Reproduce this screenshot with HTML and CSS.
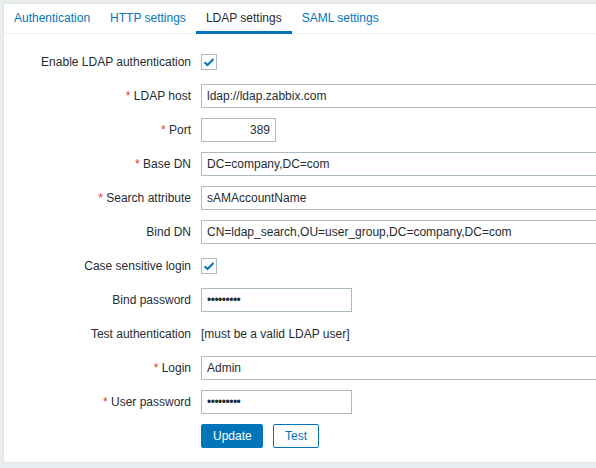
FILE: index.html
```html
<!DOCTYPE html>
<html>
<head>
<meta charset="utf-8">
<link rel="stylesheet" href="styles.css">
</head>
<body>
<div class="container">
  <ul class="tabs">
    <li class="tab">Authentication</li>
    <li class="tab">HTTP settings</li>
    <li class="tab active">LDAP settings</li>
    <li class="tab">SAML settings</li>
  </ul>
  <div class="form">
    <div class="label">Enable LDAP authentication</div>
    <div class="field"><span class="checkbox"><svg width="12" height="10" viewBox="0 0 12 10"><path d="M1.5 5.2 L4.5 8 L10.5 2" fill="none" stroke="#0275b8" stroke-width="2"/></svg></span></div>

    <div class="label"><span class="req">*</span> LDAP host</div>
    <div class="field"><input class="input wide" type="text" value="ldap://ldap.zabbix.com"></div>

    <div class="label"><span class="req">*</span> Port</div>
    <div class="field"><input class="input port" type="text" value="389"></div>

    <div class="label"><span class="req">*</span> Base DN</div>
    <div class="field"><input class="input wide" type="text" value="DC=company,DC=com"></div>

    <div class="label"><span class="req">*</span> Search attribute</div>
    <div class="field"><input class="input wide" type="text" value="sAMAccountName"></div>

    <div class="label">Bind DN</div>
    <div class="field"><input class="input wide" type="text" value="CN=ldap_search,OU=user_group,DC=company,DC=com"></div>

    <div class="label">Case sensitive login</div>
    <div class="field"><span class="checkbox"><svg width="12" height="10" viewBox="0 0 12 10"><path d="M1.5 5.2 L4.5 8 L10.5 2" fill="none" stroke="#0275b8" stroke-width="2"/></svg></span></div>

    <div class="label">Bind password</div>
    <div class="field"><input class="input pass" type="text" value="•••••••••"></div>

    <div class="label">Test authentication</div>
    <div class="field"><span class="text">[must be a valid LDAP user]</span></div>

    <div class="label"><span class="req">*</span> Login</div>
    <div class="field"><input class="input wide" type="text" value="Admin"></div>

    <div class="label"><span class="req">*</span> User password</div>
    <div class="field"><input class="input pass" type="text" value="•••••••••"></div>

    <div class="label"></div>
    <div class="field buttons"><button class="btn primary">Update</button><button class="btn alt">Test</button></div>
  </div>
</div>
</body>
</html>
```
FILE: styles.css
```css
html, body {
  margin: 0;
  padding: 0;
}
body {
  background: #ebeef0;
  font-family: "Liberation Sans", Arial, sans-serif;
  font-size: 12px;
  color: #1f2c33;
  overflow: hidden;
  width: 596px;
  height: 468px;
}
.container {
  margin: 3px 0 0 3px;
  width: 593px;
  height: 460px;
  box-sizing: border-box;
  background: #fff;
  border: 1px solid #dfe4e7;
  border-right: none;
  overflow: hidden;
}
.tabs {
  list-style: none;
  margin: 0;
  padding: 0;
  display: flex;
  height: 29px;
  border-bottom: 1px solid #ebeef0;
}
.tab {
  position: relative;
  padding: 0 10px;
  line-height: 29px;
  color: #0275b8;
}
.tab.active {
  color: #1f2c33;
}
.tab.active::after {
  content: "";
  position: absolute;
  left: 0;
  right: 0;
  bottom: -1px;
  height: 3px;
  background: #0275b8;
}
.form {
  display: grid;
  grid-template-columns: 187px 1fr;
  column-gap: 10px;
  row-gap: 10px;
  padding-top: 16px;
}
.label {
  height: 24px;
  line-height: 24px;
  text-align: right;
  white-space: nowrap;
}
.req {
  color: #e33734;
}
.field {
  height: 24px;
  display: flex;
  align-items: center;
  min-width: 0;
}
.input {
  box-sizing: border-box;
  flex: none;
  height: 24px;
  border: 1px solid #acbbc2;
  padding: 0 5px;
  font-family: "Liberation Sans", Arial, sans-serif;
  font-size: 12px;
  color: #1f2c33;
  background: #fff;
  outline: none;
  margin: 0;
}
.input.wide { width: 453px; }
.input.port { width: 75px; text-align: right; }
.input.pass { width: 151px; font-size: 12px; letter-spacing: -0.5px; }
.checkbox {
  box-sizing: border-box;
  width: 16px;
  height: 16px;
  border: 1px solid #acbbc2;
  display: flex;
  align-items: center;
  justify-content: center;
}
.text { line-height: 24px; }
.buttons { gap: 10px; }
.btn {
  box-sizing: border-box;
  height: 24px;
  padding: 0 11px;
  font-family: "Liberation Sans", Arial, sans-serif;
  font-size: 12px;
  border: 1px solid #0275b8;
  border-radius: 2px;
  margin: 0;
  cursor: pointer;
}
.btn.primary {
  background: #0275b8;
  color: #fff;
  width: 62px;
}
.btn.alt {
  background: #fff;
  color: #0275b8;
  width: 46px;
}
```
